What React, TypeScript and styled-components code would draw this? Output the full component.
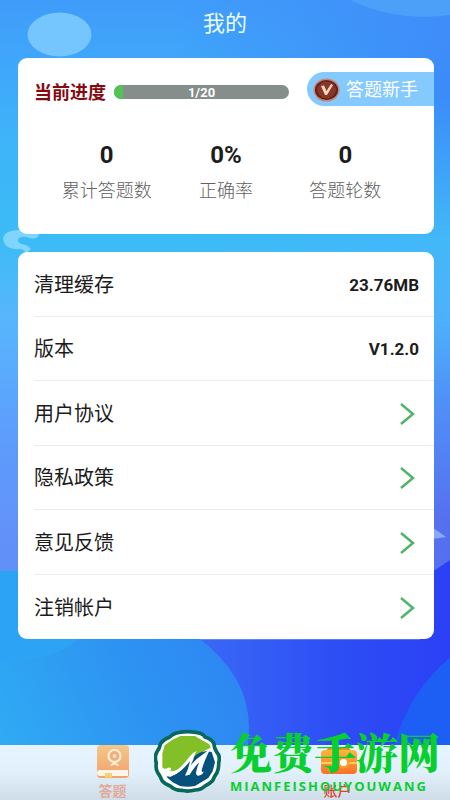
import React from 'react';
import styled, { createGlobalStyle } from 'styled-components';

const GlobalStyle = createGlobalStyle`
  *, *::before, *::after { box-sizing: border-box; }
  html, body { margin: 0; padding: 0; }
  body {
    font-family: Roboto, "Noto Sans CJK SC", sans-serif;
    color: #1c1c1c;
  }
`;

const Screen = styled.div`
  position: relative;
  isolation: isolate;
  display: flex;
  flex-direction: column;
  min-height: 100vh;
  overflow: hidden;
`;

const Backdrop = styled.svg`
  position: absolute;
  inset: 0;
  z-index: -1;
  width: 100%;
  height: 100%;
`;

const Header = styled.header`
  display: flex;
  align-items: center;
  justify-content: center;
  height: 46px;
  padding-top: 2px;
`;

const Title = styled.h1`
  margin: 0;
  font-size: 22px;
  line-height: 32px;
  font-weight: 400;
  color: #e9fbff;
`;

const Content = styled.main`
  flex: 1;
  display: flex;
  flex-direction: column;
  gap: 18px;
  padding: 12px 16px 16px 18px;
`;

const Card = styled.section`
  background: #fff;
  border-radius: 9px;
  overflow: hidden;
`;

const ProgressCard = styled(Card)`
  padding: 14px 0 30px;
`;

const ProgressRow = styled.div`
  display: flex;
  align-items: center;
  padding-left: 16px;
`;

const ProgressLabel = styled.span`
  margin: 8px 8px 0 0;
  font-size: 18px;
  line-height: 26px;
  font-weight: 700;
  color: #850b10;
  white-space: nowrap;
`;

const Track = styled.div`
  flex: 1;
  position: relative;
  height: 14px;
  margin: 6px 18px 0 0;
  border-radius: 7px;
  background: #858e8a;
  overflow: hidden;
`;

const Fill = styled.div`
  height: 100%;
  background: #52c453;
`;

const TrackText = styled.span`
  position: absolute;
  inset: 0;
  text-align: center;
  font-size: 13px;
  line-height: 15px;
  font-weight: 700;
  color: #fff;
`;

const LevelTag = styled.div`
  display: flex;
  align-items: center;
  gap: 6px;
  height: 34px;
  padding: 2px 16px 0 6px;
  border-radius: 17px 0 0 17px;
  background: #84caff;
  color: #fff;
  font-size: 18px;
  line-height: 26px;
  white-space: nowrap;
`;

const Stats = styled.dl`
  display: grid;
  grid-template-columns: repeat(3, 1fr);
  margin: 34px 29px 0;
`;

const Stat = styled.div`
  display: flex;
  flex-direction: column-reverse;
  align-items: center;
  gap: 8px;
`;

const StatName = styled.dt`
  font-size: 18px;
  line-height: 26px;
  font-weight: 300;
  color: #606060;
  white-space: nowrap;
`;

const StatValue = styled.dd`
  margin: 0;
  font-size: 24px;
  line-height: 30px;
  font-weight: 700;
`;

const MenuCard = styled(Card)`
  display: grid;
  grid-auto-rows: 1fr;
  min-height: 387px;
  padding-left: 16px;
`;

const rowStyle = `
  display: flex;
  align-items: center;
  justify-content: space-between;
  width: 100%;
  padding: 2px 15px 0 0;
  border: 0;
  border-bottom: 1px solid #ececec;
  background: none;
  color: inherit;
  font-family: inherit;
  font-size: 20px;
  line-height: 30px;
  text-align: left;
  &:last-child { border-bottom: 0; }
`;

const InfoRow = styled.div`${rowStyle}`;
const LinkRow = styled.button`${rowStyle} cursor: pointer;`;

const RowValue = styled.span`
  font-size: 17px;
  font-weight: 700;
`;

const Chevron = styled.svg`
  width: 16px;
  height: 24px;
  margin-right: 4px;
`;

const TabBar = styled.nav`
  display: flex;
  height: 55px;
  background: linear-gradient(#e6f4ff, #e2f1fb 45%, #cfdde8);
`;

const Tab = styled.button<{ $active?: boolean }>`
  flex: 1;
  display: flex;
  flex-direction: column;
  align-items: center;
  justify-content: space-between;
  padding: 0;
  border: 0;
  background: none;
  font-family: inherit;
  font-size: 14px;
  line-height: 18px;
  font-weight: ${(p) => (p.$active ? 500 : 700)};
  color: ${(p) => (p.$active ? '#e2402c' : '#e1aa9b')};
  cursor: pointer;
`;

const Watermark = styled.div`
  position: absolute;
  right: 10px;
  bottom: 6px;
  display: flex;
  align-items: center;
  gap: 9px;
  color: #08cf2f;
  pointer-events: none;
`;

const WatermarkText = styled.div`
  display: flex;
  flex-direction: column;
  gap: 4px;
`;

const WatermarkName = styled.span`
  font-family: "Noto Serif CJK SC", "Noto Sans CJK SC", serif;
  font-size: 42px;
  line-height: 46px;
  font-weight: 900;
  white-space: nowrap;
`;

const WatermarkLatin = styled.span`
  font-family: "Open Sans", sans-serif;
  font-size: 13px;
  line-height: 16px;
  font-weight: 700;
  letter-spacing: 2px;
  white-space: nowrap;
`;

const Scenery = () => (
  <Backdrop viewBox="0 0 450 800" preserveAspectRatio="none" aria-hidden="true">
    <defs>
      <linearGradient id="sky" x1="0" y1="0" x2="0" y2="1">
        <stop offset="0" stopColor="#409cfb" />
        <stop offset="0.16" stopColor="#3eb2f9" />
        <stop offset="0.3" stopColor="#3bbcf6" />
        <stop offset="0.4" stopColor="#58b6fd" />
        <stop offset="0.53" stopColor="#5c9ffc" />
        <stop offset="0.66" stopColor="#6292f8" />
        <stop offset="0.7" stopColor="#6190f8" />
      </linearGradient>
      <linearGradient id="skyRight" x1="0" y1="0" x2="0" y2="1">
        <stop offset="0" stopColor="#408df8" />
        <stop offset="0.12" stopColor="#3b8bf8" />
        <stop offset="0.3" stopColor="#43b8f8" />
        <stop offset="0.4" stopColor="#4eb0fb" />
        <stop offset="0.5" stopColor="#5090f6" />
        <stop offset="0.65" stopColor="#5570ee" />
        <stop offset="1" stopColor="#4f6df0" />
      </linearGradient>
      <linearGradient id="fadeRight">
        <stop offset="0.4" stopColor="#000" />
        <stop offset="1" stopColor="#fff" />
      </linearGradient>
      <mask id="rightSide">
        <rect width="450" height="800" fill="url(#fadeRight)" />
      </mask>
      <linearGradient id="deep">
        <stop offset="0.4" stopColor="#3b6df5" />
        <stop offset="0.75" stopColor="#2d4df5" />
        <stop offset="1" stopColor="#2b40f5" />
      </linearGradient>
      <linearGradient id="sea" x1="0" y1="0.7" x2="1" y2="0.3">
        <stop offset="0" stopColor="#30aaf3" />
        <stop offset="0.5" stopColor="#2d94f2" />
        <stop offset="1" stopColor="#2e84f3" />
      </linearGradient>
    </defs>
    <rect width="450" height="800" fill="url(#sky)" />
    <rect width="450" height="800" fill="url(#skyRight)" mask="url(#rightSide)" />
    <path d="M350 0Q395 22 450 15V0Z" fill="#4da0f8" />
    <ellipse cx="59.500" cy="34.500" rx="32" ry="22" fill="#75c5ff" />
    <path d="M40 230H18Q0 231 4 243Q8 250 20 249Q26 250 25 254L31 249Q28 245 22 244Q16 242 19 238Q22 236 27 237Q33 240 38 237Z" fill="#7fd5fc" />
    <path d="M432 527L446 537L432 539Z" fill="#87a9f6" />
    <path d="M0 640H420V580L450 560V800H0Z" fill="url(#deep)" />
    <path d="M0 571H60L197 637Q249 675 249 728Q249 770 225 800H0Z" fill="url(#sea)" />
    <path d="M0 571H80V638Q48 665 0 660Z" fill="#2ca3f4" />
    <path d="M450 658Q410 690 394 745H450Z" fill="#1d5ef5" />
  </Backdrop>
);

const Medal = () => (
  <svg width="27" height="24" viewBox="0 0 27 24" preserveAspectRatio="none" aria-hidden="true">
    <ellipse cx="13.500" cy="12" rx="13" ry="11.500" fill="#c7857a" />
    <ellipse cx="13.500" cy="12" rx="11.500" ry="10" fill="#641f19" />
    <ellipse cx="13.500" cy="12" rx="9.500" ry="8.500" fill="#87372a" />
    <path d="M8 8L11 7.500L13.500 13L18 6L20 7L14 17H12Z" fill="#ffd4bf" />
  </svg>
);

const BookIcon = () => (
  <svg width="34" height="34" viewBox="0 0 34 34" aria-hidden="true">
    <defs>
      <linearGradient id="cover" x1="0" y1="0" x2="0" y2="1">
        <stop stopColor="#f3c987" />
        <stop offset="1" stopColor="#f3a06b" />
      </linearGradient>
    </defs>
    <rect x="1" y="0" width="32" height="33" rx="4" fill="url(#cover)" />
    <path d="M4 25H32V31H4Q1 31 1 28T4 25Z" fill="#fff5e8" />
    <path d="M9 28H16V34L12.500 32L9 34Z" fill="#f8cf72" />
    <circle cx="18.500" cy="11" r="6" fill="#f1af7d" stroke="#fff0df" strokeWidth="2" />
    <circle cx="18.500" cy="11" r="2" fill="#f7e0cc" />
    <path d="M14 20L18.500 17L23 20L22 21L18.500 19.500L15 21Z" fill="#fff0df" />
  </svg>
);

const WalletIcon = () => (
  <svg width="38" height="34" viewBox="0 0 38 34" aria-hidden="true">
    <defs>
      <linearGradient id="wallet" x1="0" y1="0" x2="0" y2="1">
        <stop stopColor="#ffb637" />
        <stop offset="1" stopColor="#fa702c" />
      </linearGradient>
    </defs>
    <path d="M6 7L9 3Q10 2 12 2H27Q29 2 30 3L33 7Z" fill="#f68b25" />
    <rect x="2" y="5" width="36" height="24" rx="4" fill="url(#wallet)" />
    <path d="M2 18H18M30 18H38" stroke="#ffd05d" strokeWidth="2" />
    <circle cx="24.500" cy="17.500" r="6" fill="#ff9d2e" />
    <circle cx="24.500" cy="17.500" r="3.500" fill="#fff" />
  </svg>
);

const Emblem = () => (
  <svg width="67" height="65" viewBox="12 19 201 195" aria-hidden="true">
    <path
      d="M88 29Q112 25 138 29Q158 31 165 43Q184 49 191 61Q193 78 200 88Q212 101 206 120Q207 137 201 150Q193 161 188 174Q177 185 165 190Q153 202 135 202Q113 208 94 203Q75 203 62 191Q45 185 36 174Q31 160 23 150Q16 138 19 121Q13 105 20 89Q29 77 32 62Q41 50 58 44Q70 31 88 29Z"
      fill="#fff"
      stroke="#08685b"
      strokeWidth="11"
      strokeLinejoin="round"
    />
    <path d="M91 40H135L151 50L178 65L182 75Q160 84 139 100L105 130Q82 150 50 145L37 134V93L44 68L67 51Z" fill="#83bf27" />
    <path d="M185 88L195 119L188 146L175 166L155 178L135 190Q113 195 90 190L68 179L49 162Q83 158 103 133L130 104Q150 84 172 86Z" fill="#04527b" />
    <path
      d="M38 143Q41 137 49 138Q61 130 64 139Q62 144 57 146Q76 149 92 133Q109 115 121 99Q130 89 140 85Q136 91 134 97Q130 113 121 129Q138 109 159 95Q169 87 184 76Q176 87 171 99Q162 118 156 139Q153 148 159 148L162 146Q156 160 143 159Q136 156 139 145Q142 132 148 119Q134 132 119 156L105 159Q117 135 120 115Q108 131 94 143Q76 158 60 163Q47 159 38 143Z"
      fill="#fff"
    />
  </svg>
);

const stats = [
  { name: '累计答题数', value: '0' },
  { name: '正确率', value: '0%' },
  { name: '答题轮数', value: '0' },
];

const info = [
  { name: '清理缓存', value: '23.76MB' },
  { name: '版本', value: 'V1.2.0' },
];

const links = ['用户协议', '隐私政策', '意见反馈', '注销帐户'];

export default function App() {
  const done = 1;
  const total = 20;
  return (
    <>
      <GlobalStyle />
      <Screen>
        <Scenery />
        <Header>
          <Title>我的</Title>
        </Header>
        <Content>
          <ProgressCard>
            <ProgressRow>
              <ProgressLabel id="progress-label">当前进度</ProgressLabel>
              <Track
                role="progressbar"
                aria-labelledby="progress-label"
                aria-valuenow={done}
                aria-valuemin={0}
                aria-valuemax={total}
              >
                <Fill style={{ width: `${(done / total) * 100}%` }} />
                <TrackText>{done}/{total}</TrackText>
              </Track>
              <LevelTag>
                <Medal />
                答题新手
              </LevelTag>
            </ProgressRow>
            <Stats>
              {stats.map((s) => (
                <Stat key={s.name}>
                  <StatName>{s.name}</StatName>
                  <StatValue>{s.value}</StatValue>
                </Stat>
              ))}
            </Stats>
          </ProgressCard>
          <MenuCard>
            {info.map((row) => (
              <InfoRow key={row.name}>
                <span>{row.name}</span>
                <RowValue>{row.value}</RowValue>
              </InfoRow>
            ))}
            {links.map((name) => (
              <LinkRow key={name} type="button">
                <span>{name}</span>
                <Chevron viewBox="0 0 16 24" aria-hidden="true">
                  <path d="M2 2L14 12L2 22" fill="none" stroke="#50b565" strokeWidth="2.500" />
                </Chevron>
              </LinkRow>
            ))}
          </MenuCard>
        </Content>
        <TabBar>
          <Tab type="button">
            <BookIcon />
            答题
          </Tab>
          <Tab type="button" $active>
            <WalletIcon />
            账户
          </Tab>
        </TabBar>
        <Watermark>
          <Emblem />
          <WatermarkText>
            <WatermarkName>免费手游网</WatermarkName>
            <WatermarkLatin>MIANFEISHOUYOUWANG</WatermarkLatin>
          </WatermarkText>
        </Watermark>
      </Screen>
    </>
  );
}
